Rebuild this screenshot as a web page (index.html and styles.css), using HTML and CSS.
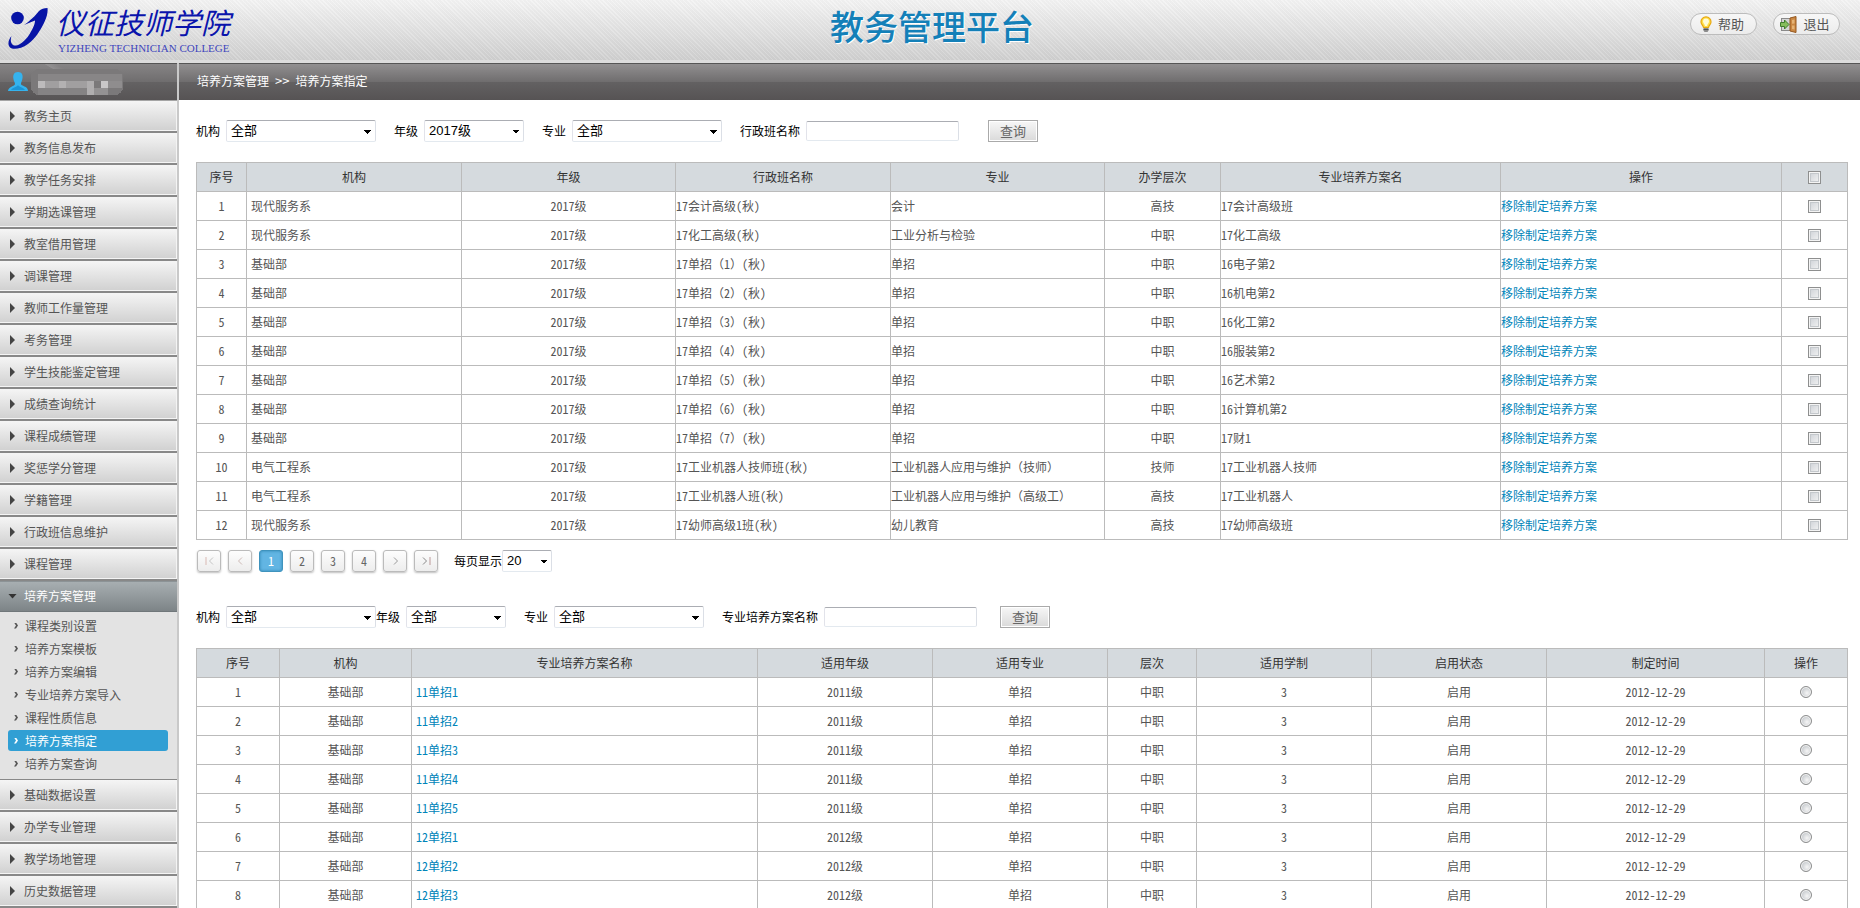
FILE: index.html
```html
<!DOCTYPE html>
<html lang="zh-CN">
<head>
<meta charset="utf-8">
<title>教务管理平台</title>
<link rel="stylesheet" href="styles.css">
</head>
<body>
<div class="app">
<header class="top">
  <a class="logo" href="#">
    <svg class="logo-mark" width="42" height="44" viewBox="0 0 42 44" aria-hidden="true">
      <circle cx="9.500" cy="12" r="6.300" fill="#0714a6"/>
      <path d="M39.500 2C36 2 33 3 31 5C28 9 22 15 16 19L27 14.500C27 19 24 24 21 29C17 35 12 39 8 39.500C4 40 1.500 36 3.500 30C0 34 -.5 39 2 41.500C5 44 13 43 20 38C27 33 32 25 36 17C39 11 40 6 39.500 2Z" fill="#0714a6"/>
    </svg>
    <span class="logo-text">
      <span class="logo-cn">仪征技师学院</span>
      <span class="logo-en">YIZHENG TECHNICIAN COLLEGE</span>
    </span>
  </a>
  <h1 class="title">教务管理平台</h1>
  <div class="actions">
    <button class="pill" type="button">
      <svg width="12" height="17" viewBox="0 0 12 17" aria-hidden="true">
        <path d="M6 .8A5 5 0 0 0 1 5.900C1 8.400 3 9 3.500 11.500H8.500C9 9 11 8.400 11 5.900A5 5 0 0 0 6 .8Z" fill="#ffdf4a" stroke="#e8a810" stroke-width="1.200"/>
        <path d="M6 2.500A3.200 3.200 0 0 0 3 5.600C3 7 4.500 8 5 10H7C7.500 8 9 7 9 5.600A3.200 3.200 0 0 0 6 2.500Z" fill="#fffbd8"/>
        <path d="M3.500 12H8.500V14.500L7.500 16H4.500L3.500 14.500Z" fill="#8c8c8c"/><path d="M3.500 13.500H8.500" stroke="#555"/>
      </svg>帮助</button>
    <button class="pill" type="button">
      <svg width="17" height="17" viewBox="0 0 17 17" aria-hidden="true">
        <rect x="1.500" y="2.500" width="10" height="12" fill="#d5d5d5" stroke="#8a8a8a"/>
        <path d="M10 2L16 .5V16.500L10 15Z" fill="#c98743" stroke="#94571f"/>
        <path d="M12 4L14.500 3.500V7.500L12 7.800ZM12 9.500H14.500V13.500L12 13Z" fill="#e5b375"/>
        <path d="M.5 6.500H4.500V4L9 8.500L4.500 13V10.500H.5Z" fill="#86bd5c" stroke="#3f7d2c"/>
      </svg>退出</button>
  </div>
</header>
<div class="body">
<aside class="side">
  <div class="user">
    <svg width="20" height="20" viewBox="0 0 20 20" aria-hidden="true">
      <path d="M10 0C14 0 15 3 14.500 6C14.200 9 13 10 13 12C13 14 20 14 20 19H0C0 15 7 14 7 12C7 10 5.500 9 5.300 6C5 3 6 0 10 0Z" fill="#35b3ee"/>
      <path d="M3 18C5 15 9 15 10 13C11 15 15 15 17 18Z" fill="#1c95d6"/>
    </svg>
    <svg class="masked" width="92" height="26" viewBox="0 0 92 26" shape-rendering="crispEdges" aria-hidden="true">
      <rect width="92" height="26" rx="8" fill="#7b797a"/>
      <rect x="7" y="5" width="84" height="7" fill="#888687"/>
      <rect x="7" y="12" width="56" height="7" fill="#a19fa0"/>
      <rect x="7" y="12" width="7" height="7" fill="#bdbbbc"/>
      <rect x="28" y="12" width="7" height="7" fill="#b3b1b2"/>
      <rect x="56" y="12" width="7" height="14" fill="#b0aeaf"/>
      <rect x="70" y="12" width="7" height="7" fill="#c9c7c8"/>
      <rect x="77" y="12" width="14" height="7" fill="#8f8d8e"/>
      <rect x="7" y="19" width="49" height="7" fill="#858384"/>
      <rect x="63" y="19" width="14" height="7" fill="#949293"/>
    </svg>
  </div>
  <nav class="menu">
    <a class="item" href="#">教务主页</a>
    <a class="item" href="#">教务信息发布</a>
    <a class="item" href="#">教学任务安排</a>
    <a class="item" href="#">学期选课管理</a>
    <a class="item" href="#">教室借用管理</a>
    <a class="item" href="#">调课管理</a>
    <a class="item" href="#">教师工作量管理</a>
    <a class="item" href="#">考务管理</a>
    <a class="item" href="#">学生技能鉴定管理</a>
    <a class="item" href="#">成绩查询统计</a>
    <a class="item" href="#">课程成绩管理</a>
    <a class="item" href="#">奖惩学分管理</a>
    <a class="item" href="#">学籍管理</a>
    <a class="item" href="#">行政班信息维护</a>
    <a class="item" href="#">课程管理</a>
    <a class="item open" href="#">培养方案管理</a>
    <div class="sub">
      <a class="leaf" href="#">课程类别设置</a>
      <a class="leaf" href="#">培养方案模板</a>
      <a class="leaf" href="#">培养方案编辑</a>
      <a class="leaf" href="#">专业培养方案导入</a>
      <a class="leaf" href="#">课程性质信息</a>
      <a class="leaf current" href="#">培养方案指定</a>
      <a class="leaf" href="#">培养方案查询</a>
    </div>
    <a class="item" href="#">基础数据设置</a>
    <a class="item" href="#">办学专业管理</a>
    <a class="item" href="#">教学场地管理</a>
    <a class="item" href="#">历史数据管理</a>
  </nav>
</aside>
<main class="main">
  <div class="crumbs">培养方案管理 <span class="sep">&gt;&gt;</span> 培养方案指定</div>
  <div class="content">
    <form class="filters">
      <div class="field"><label for="org1">机构</label><select id="org1" class="wide"><option>全部</option></select></div>
      <div class="field"><label for="grade1">年级</label><select id="grade1" class="mid"><option>2017级</option></select></div>
      <div class="field"><label for="major1">专业</label><select id="major1" class="wide"><option>全部</option></select></div>
      <div class="field"><label for="class1">行政班名称</label><input id="class1" class="text" type="text"></div>
      <button class="query" type="button">查询</button>
    </form>
    <table class="grid">
      <colgroup><col class="w50"><col class="w215"><col class="w214"><col class="w215"><col class="w214"><col class="w116"><col class="w280"><col class="w281"><col class="w66"></colgroup>
      <thead><tr><th>序号</th><th>机构</th><th>年级</th><th>行政班名称</th><th>专业</th><th>办学层次</th><th>专业培养方案名</th><th>操作</th><th><input type="checkbox" aria-label="全选"></th></tr></thead>
      <tbody>
        <tr><td>1</td><td class="l pad">现代服务系</td><td>2017级</td><td class="l">17会计高级(秋)</td><td class="l">会计</td><td>高技</td><td class="l">17会计高级班</td><td class="l"><a href="#">移除制定培养方案</a></td><td><input type="checkbox" aria-label="选择1"></td></tr>
        <tr><td>2</td><td class="l pad">现代服务系</td><td>2017级</td><td class="l">17化工高级(秋)</td><td class="l">工业分析与检验</td><td>中职</td><td class="l">17化工高级</td><td class="l"><a href="#">移除制定培养方案</a></td><td><input type="checkbox" aria-label="选择2"></td></tr>
        <tr><td>3</td><td class="l pad">基础部</td><td>2017级</td><td class="l">17单招<span class="full">（</span>1<span class="full">）</span>(秋)</td><td class="l">单招</td><td>中职</td><td class="l">16电子第2</td><td class="l"><a href="#">移除制定培养方案</a></td><td><input type="checkbox" aria-label="选择3"></td></tr>
        <tr><td>4</td><td class="l pad">基础部</td><td>2017级</td><td class="l">17单招<span class="full">（</span>2<span class="full">）</span>(秋)</td><td class="l">单招</td><td>中职</td><td class="l">16机电第2</td><td class="l"><a href="#">移除制定培养方案</a></td><td><input type="checkbox" aria-label="选择4"></td></tr>
        <tr><td>5</td><td class="l pad">基础部</td><td>2017级</td><td class="l">17单招<span class="full">（</span>3<span class="full">）</span>(秋)</td><td class="l">单招</td><td>中职</td><td class="l">16化工第2</td><td class="l"><a href="#">移除制定培养方案</a></td><td><input type="checkbox" aria-label="选择5"></td></tr>
        <tr><td>6</td><td class="l pad">基础部</td><td>2017级</td><td class="l">17单招<span class="full">（</span>4<span class="full">）</span>(秋)</td><td class="l">单招</td><td>中职</td><td class="l">16服装第2</td><td class="l"><a href="#">移除制定培养方案</a></td><td><input type="checkbox" aria-label="选择6"></td></tr>
        <tr><td>7</td><td class="l pad">基础部</td><td>2017级</td><td class="l">17单招<span class="full">（</span>5<span class="full">）</span>(秋)</td><td class="l">单招</td><td>中职</td><td class="l">16艺术第2</td><td class="l"><a href="#">移除制定培养方案</a></td><td><input type="checkbox" aria-label="选择7"></td></tr>
        <tr><td>8</td><td class="l pad">基础部</td><td>2017级</td><td class="l">17单招<span class="full">（</span>6<span class="full">）</span>(秋)</td><td class="l">单招</td><td>中职</td><td class="l">16计算机第2</td><td class="l"><a href="#">移除制定培养方案</a></td><td><input type="checkbox" aria-label="选择8"></td></tr>
        <tr><td>9</td><td class="l pad">基础部</td><td>2017级</td><td class="l">17单招<span class="full">（</span>7<span class="full">）</span>(秋)</td><td class="l">单招</td><td>中职</td><td class="l">17财1</td><td class="l"><a href="#">移除制定培养方案</a></td><td><input type="checkbox" aria-label="选择9"></td></tr>
        <tr><td>10</td><td class="l pad">电气工程系</td><td>2017级</td><td class="l">17工业机器人技师班(秋)</td><td class="l full">工业机器人应用与维护（技师）</td><td>技师</td><td class="l">17工业机器人技师</td><td class="l"><a href="#">移除制定培养方案</a></td><td><input type="checkbox" aria-label="选择10"></td></tr>
        <tr><td>11</td><td class="l pad">电气工程系</td><td>2017级</td><td class="l">17工业机器人班(秋)</td><td class="l full">工业机器人应用与维护（高级工）</td><td>高技</td><td class="l">17工业机器人</td><td class="l"><a href="#">移除制定培养方案</a></td><td><input type="checkbox" aria-label="选择11"></td></tr>
        <tr><td>12</td><td class="l pad">现代服务系</td><td>2017级</td><td class="l">17幼师高级1班(秋)</td><td class="l">幼儿教育</td><td>高技</td><td class="l">17幼师高级班</td><td class="l"><a href="#">移除制定培养方案</a></td><td><input type="checkbox" aria-label="选择12"></td></tr>
      </tbody>
    </table>
    <div class="pager">
      <button class="page" type="button" disabled aria-label="首页"><svg width="9" height="8" viewBox="0 0 9 8"><path d="M1 0V8" stroke="#d9b9b3"/><path d="M8 .5L4.500 4L8 7.500" fill="none" stroke="#c4c4c4"/></svg></button>
      <button class="page" type="button" disabled aria-label="上一页"><svg width="9" height="8" viewBox="0 0 9 8"><path d="M6 .5L2.500 4L6 7.500" fill="none" stroke="#ccb9b5"/></svg></button>
      <button class="page on" type="button">1</button>
      <button class="page" type="button">2</button>
      <button class="page" type="button">3</button>
      <button class="page" type="button">4</button>
      <button class="page" type="button" aria-label="下一页"><svg width="9" height="8" viewBox="0 0 9 8"><path d="M3 .5L6.500 4L3 7.500" fill="none" stroke="#999"/></svg></button>
      <button class="page" type="button" aria-label="末页"><svg width="9" height="8" viewBox="0 0 9 8"><path d="M8 0V8" stroke="#b99"/><path d="M1 .5L4.500 4L1 7.500" fill="none" stroke="#888"/></svg></button>
      <div class="size"><label for="size">每页显示</label><select id="size" class="small"><option>20</option></select></div>
    </div>
    <form class="filters">
      <div class="field joined"><label for="org2">机构</label><select id="org2" class="wide"><option>全部</option></select></div>
      <div class="field"><label for="grade2">年级</label><select id="grade2" class="mid"><option>全部</option></select></div>
      <div class="field"><label for="major2">专业</label><select id="major2" class="wide"><option>全部</option></select></div>
      <div class="field"><label for="plan2">专业培养方案名称</label><input id="plan2" class="text" type="text"></div>
      <button class="query near" type="button">查询</button>
    </form>
    <table class="grid">
      <colgroup><col class="w83"><col class="w132"><col class="w346"><col class="w175"><col class="w175"><col class="w89"><col class="w175"><col class="w175"><col class="w218"><col class="w83"></colgroup>
      <thead><tr><th>序号</th><th>机构</th><th>专业培养方案名称</th><th>适用年级</th><th>适用专业</th><th>层次</th><th>适用学制</th><th>启用状态</th><th>制定时间</th><th>操作</th></tr></thead>
      <tbody>
        <tr><td>1</td><td>基础部</td><td class="l pad"><a href="#">11单招1</a></td><td>2011级</td><td>单招</td><td>中职</td><td>3</td><td>启用</td><td>2012-12-29</td><td><input type="radio" name="plan" aria-label="11单招1"></td></tr>
        <tr><td>2</td><td>基础部</td><td class="l pad"><a href="#">11单招2</a></td><td>2011级</td><td>单招</td><td>中职</td><td>3</td><td>启用</td><td>2012-12-29</td><td><input type="radio" name="plan" aria-label="11单招2"></td></tr>
        <tr><td>3</td><td>基础部</td><td class="l pad"><a href="#">11单招3</a></td><td>2011级</td><td>单招</td><td>中职</td><td>3</td><td>启用</td><td>2012-12-29</td><td><input type="radio" name="plan" aria-label="11单招3"></td></tr>
        <tr><td>4</td><td>基础部</td><td class="l pad"><a href="#">11单招4</a></td><td>2011级</td><td>单招</td><td>中职</td><td>3</td><td>启用</td><td>2012-12-29</td><td><input type="radio" name="plan" aria-label="11单招4"></td></tr>
        <tr><td>5</td><td>基础部</td><td class="l pad"><a href="#">11单招5</a></td><td>2011级</td><td>单招</td><td>中职</td><td>3</td><td>启用</td><td>2012-12-29</td><td><input type="radio" name="plan" aria-label="11单招5"></td></tr>
        <tr><td>6</td><td>基础部</td><td class="l pad"><a href="#">12单招1</a></td><td>2012级</td><td>单招</td><td>中职</td><td>3</td><td>启用</td><td>2012-12-29</td><td><input type="radio" name="plan" aria-label="12单招1"></td></tr>
        <tr><td>7</td><td>基础部</td><td class="l pad"><a href="#">12单招2</a></td><td>2012级</td><td>单招</td><td>中职</td><td>3</td><td>启用</td><td>2012-12-29</td><td><input type="radio" name="plan" aria-label="12单招2"></td></tr>
        <tr><td>8</td><td>基础部</td><td class="l pad"><a href="#">12单招3</a></td><td>2012级</td><td>单招</td><td>中职</td><td>3</td><td>启用</td><td>2012-12-29</td><td><input type="radio" name="plan" aria-label="12单招3"></td></tr>
      </tbody>
    </table>
  </div>
</main>
</div>
</div>
</body>
</html>
```

FILE: styles.css
```css
* { box-sizing: border-box; }
body {
  margin: 0;
  background: #fff;
  color: #000;
  font: 12px/16px "Noto Sans CJK SC", sans-serif;
  font-feature-settings: "hwid";
}
a { color: inherit; text-decoration: none; }
button, input, select { margin: 0; font: inherit; font-feature-settings: inherit; }
.app { display: flex; flex-direction: column; height: 100vh; overflow: hidden; }

/* header */
.top {
  display: grid;
  grid-template-columns: 1fr auto 1fr;
  flex: none;
  height: 63px;
  border-bottom: 3px solid #dcdcdc;
  background:
    repeating-linear-gradient(45deg, rgba(255, 255, 255, .12) 0 1px, rgba(0, 0, 0, .02) 1px 3px),
    linear-gradient(#f4f4f4, #d0d0d0);
}
.logo { display: flex; gap: 6px; padding-left: 8px; }
.logo-mark { flex: none; margin-top: 6px; }
.logo-text { display: flex; flex-direction: column; color: #0a14ac; }
.logo-cn { font-size: 29px; line-height: 42px; font-style: italic; white-space: nowrap; }
.logo-en { padding-left: 2px; color: #3f46bd; font: 11px/12px "Liberation Serif", serif; white-space: nowrap; }
.title {
  margin: 0;
  padding: 4px 0 0 4px;
  color: #1480b8;
  font-size: 34px;
  font-weight: 500;
  line-height: 44px;
  text-shadow: 1px 1px 0 #fff;
}
.actions { display: flex; justify-content: flex-end; gap: 16px; padding: 13px 20px 0 0; }
.pill {
  display: flex;
  align-items: center;
  justify-content: center;
  gap: 6px;
  width: 67px;
  height: 22px;
  padding: 0 3px 0 0;
  border: 1px solid #bcbcbc;
  border-radius: 11px;
  background: linear-gradient(#f7f7f7, #ececec);
  color: #555;
  font-size: 13px;
}

/* frame */
.body { display: flex; flex: 1; min-height: 0; }
.side {
  flex: none;
  width: 179px;
  overflow: hidden;
  border-right: 2px solid #c9c9c9;
  background: #e3e3e3;
}
.user {
  display: flex;
  align-items: center;
  gap: 3px;
  height: 38px;
  padding-left: 8px;
  border-top: 1px solid #555;
  border-bottom: 1px solid #a5a5a5;
  background:
    linear-gradient(30deg, transparent 70%, rgba(255, 255, 255, .12) 71%, transparent 78%) 0 0 / 90px 37px no-repeat,
    linear-gradient(#868485, #6f6d6e 50%, #646263 50%, #575455);
}
.crumbs {
  height: 37px;
  padding-left: 18px;
  border-top: 1px solid #555;
  background: linear-gradient(#918f90, #6f6d6e 50%, #636162 50%, #565354);
  color: #fff;
  line-height: 33px;
}
.item {
  display: flex;
  align-items: center;
  gap: 9px;
  height: 32px;
  padding-left: 10px;
  border-bottom: 2px solid #888;
  background: linear-gradient(#f5f5f5, #d0d0d0);
  box-shadow: inset -1px -1px 0 #f4f4f4;
  color: #555;
}
.item::before {
  content: "";
  width: 5px;
  height: 10px;
  background: #444;
  clip-path: polygon(0 0, 100% 50%, 0 100%);
}
.item.open {
  gap: 7px;
  height: 31px;
  padding-left: 8px;
  border-bottom: 1px solid #70777a;
  background: linear-gradient(#a9b0b3, #7d8487);
  box-shadow: inset 0 1px 0 #8c9396;
  color: #fff;
}
.item.open::before { width: 9px; height: 5px; background: #333; clip-path: polygon(0 0, 100% 0, 50% 100%); }
.sub { padding: 3px 9px 3px 8px; border-bottom: 1px solid #888; background: #e3e3e3; }
.leaf {
  display: flex;
  align-items: center;
  gap: 7px;
  height: 21px;
  margin: 0 0 2px;
  padding-left: 6px;
  border-radius: 3px;
  color: #555;
}
.leaf::before {
  content: "";
  width: 4px;
  height: 6px;
  background: currentColor;
  clip-path: polygon(0 0, 50% 0, 100% 50%, 50% 100%, 0 100%, 50% 50%);
}
.leaf.current { background: #319fd4; color: #fff; }
.main { flex: 1; min-width: 0; overflow: hidden; }
.content { padding: 20px 12px 0 17px; }
.full, .sep { font-feature-settings: normal; }
.sep { font-size: 13px; }

/* filters */
.filters { display: flex; align-items: center; gap: 18px; height: 22px; margin-bottom: 20px; }
.field { display: flex; align-items: center; gap: 6px; white-space: nowrap; }
.field.joined { margin-right: -18px; }
select, .text {
  border: 1px solid;
  border-color: #abadb3 #dbdfe6 #e3e9ef #e2e3ea;
  border-radius: 2px;
  background-color: #fff;
  color: #000;
}
select {
  appearance: none;
  height: 22px;
  padding: 0 12px 0 4px;
  background-image:
    linear-gradient(to bottom left, #000 50%, transparent 50%),
    linear-gradient(to bottom right, #000 50%, transparent 50%);
  background-position: right 7px top 9px, right 3px top 9px;
  background-size: 4px 4px;
  background-repeat: no-repeat;
  font: 13px/18px "Liberation Sans", "Noto Sans CJK SC", sans-serif;
}
.wide { width: 150px; }
.mid { width: 100px; }
.small { width: 50px; }
.text { width: 153px; height: 20px; padding: 0 4px; }
.query {
  width: 50px;
  height: 22px;
  margin-left: 11px;
  padding: 0;
  border: 1px solid #aaa;
  background: linear-gradient(#f7f7f7, #dadada);
  box-shadow: inset 0 0 0 1px #fff;
  color: #666;
  font-size: 13px;
  line-height: 18px;
}
.query.near { margin-left: 5px; }

/* tables */
.grid { width: 100%; table-layout: fixed; border-collapse: collapse; }
.grid th, .grid td { height: 29px; padding: 0; border: 1px solid #bbb; text-align: center; white-space: nowrap; }
.grid th { background: #d5dade; color: #333; font-weight: 400; }
.grid td { color: #555; }
.grid .l { text-align: left; }
.grid .pad { padding-left: 4px; }
.grid a { color: #0084b9; }
.grid input { display: block; appearance: none; margin: 0 auto; }
.grid input[type="checkbox"] {
  width: 13px;
  height: 13px;
  border: 1px solid #8e8f8f;
  background: linear-gradient(135deg, #cbcfd5, #f6f6f6);
  box-shadow: inset 0 0 0 1px #f4f4f4, inset 0 0 0 2px #c4c8cc;
}
.grid input[type="radio"] {
  width: 12px;
  height: 12px;
  border: 1px solid #8e8f8f;
  border-radius: 50%;
  background: radial-gradient(circle at 60% 60%, #f6f6f6, #c5c9cd 70%);
  box-shadow: inset 0 0 0 1px #f4f4f4;
}
.w50 { width: 50px; }
.w66 { width: 66px; }
.w83 { width: 83px; }
.w89 { width: 89px; }
.w116 { width: 116px; }
.w132 { width: 132px; }
.w175 { width: 175px; }
.w214 { width: 214px; }
.w215 { width: 215px; }
.w218 { width: 218px; }
.w280 { width: 280px; }
.w281 { width: 281px; }
.w346 { width: 346px; }

/* pager */
.pager { display: flex; align-items: center; gap: 7px; height: 22px; margin: 10px 0 34px 1px; }
.page {
  display: flex;
  align-items: center;
  justify-content: center;
  width: 24px;
  height: 22px;
  padding: 0;
  border: 1px solid #bbb;
  border-radius: 3px;
  background: linear-gradient(#fdfdfd, #ededed);
  box-shadow: 0 1px 2px rgba(0, 0, 0, .25);
  color: #666;
}
.page.on { border-color: #3f93bd; background: #62b5e3; box-shadow: inset 0 0 3px #2f86b3; color: #fff; }
.size { display: flex; align-items: center; margin-left: 9px; }
```
